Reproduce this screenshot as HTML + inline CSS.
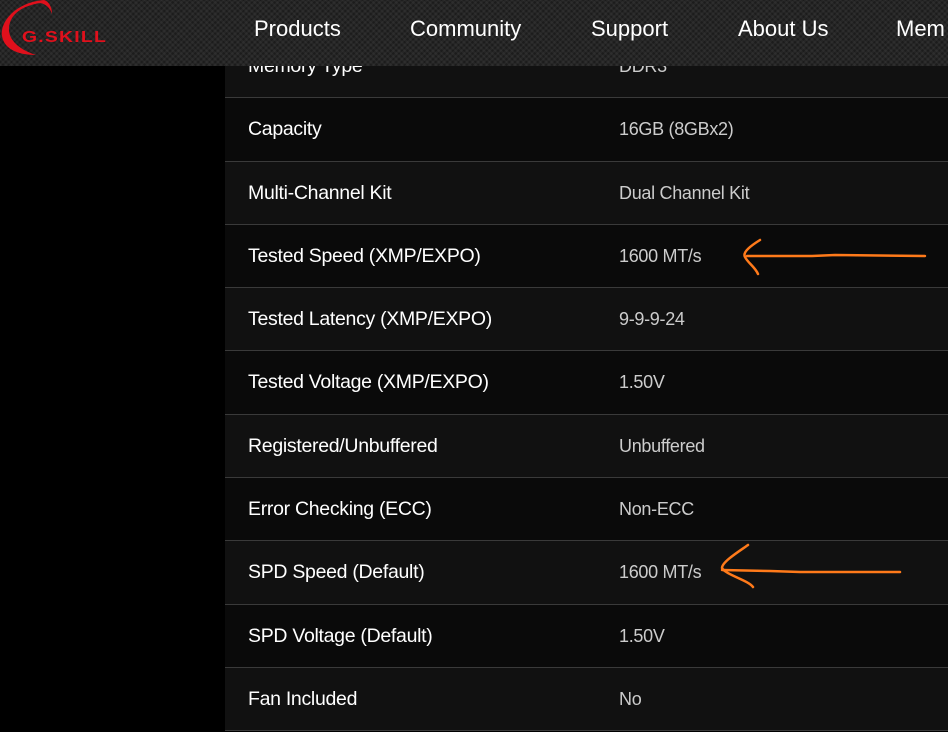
<!DOCTYPE html>
<html><head><meta charset="utf-8"><style>
html,body{margin:0;padding:0;background:#000;width:948px;height:732px;overflow:hidden;font-family:"Liberation Sans",sans-serif;}
.hdr{position:absolute;left:0;top:0;width:948px;height:66px;background:#262626;
background-image:repeating-linear-gradient(45deg,rgba(255,255,255,0.04) 0 2px,transparent 2px 4px),repeating-linear-gradient(-45deg,rgba(0,0,0,0.25) 0 2px,transparent 2px 4px);z-index:2}
.nav{position:absolute;top:16px;color:#fff;font-size:22px;}
.tbl{position:absolute;left:225px;top:35px;width:723px;}
.row{position:relative;height:62.3px;border-bottom:1px solid #3a3a3a;}
.row:nth-child(odd){background:#111}
.row:nth-child(even){background:#0a0a0a}
.l{position:absolute;left:23px;top:20px;color:#fff;font-size:19.5px;letter-spacing:-0.3px}
.v{position:absolute;left:394px;top:21px;color:#ccc;font-size:18px;letter-spacing:-0.3px}
</style></head><body>
<div class="hdr">
<svg width="120" height="60" style="position:absolute;left:0;top:0">
<path d="M44 0 C18 2 0 20 2 36 C4 48 16 55 36 55 C20 50 8 40 9 28 C10 14 22 6 40 3 C46 4 50 8 52 14 C52 6 48 1 44 0 Z" fill="#e0101c"/>
<text x="22" y="42" fill="#e0101c" font-size="16" font-weight="bold" font-family="Liberation Sans" letter-spacing="1" textLength="85" lengthAdjust="spacingAndGlyphs">G.SKILL</text>
</svg>
<div class="nav" style="left:254px">Products</div>
<div class="nav" style="left:410px">Community</div>
<div class="nav" style="left:591px">Support</div>
<div class="nav" style="left:738px">About Us</div>
<div class="nav" style="left:896px">Mem</div>
</div>
<div class="tbl">
<div class="row"><span class="l">Memory Type</span><span class="v">DDR3</span></div>
<div class="row"><span class="l">Capacity</span><span class="v">16GB (8GBx2)</span></div>
<div class="row"><span class="l">Multi-Channel Kit</span><span class="v">Dual Channel Kit</span></div>
<div class="row"><span class="l">Tested Speed (XMP/EXPO)</span><span class="v">1600 MT/s</span></div>
<div class="row"><span class="l">Tested Latency (XMP/EXPO)</span><span class="v">9-9-9-24</span></div>
<div class="row"><span class="l">Tested Voltage (XMP/EXPO)</span><span class="v">1.50V</span></div>
<div class="row"><span class="l">Registered/Unbuffered</span><span class="v">Unbuffered</span></div>
<div class="row"><span class="l">Error Checking (ECC)</span><span class="v">Non-ECC</span></div>
<div class="row"><span class="l">SPD Speed (Default)</span><span class="v">1600 MT/s</span></div>
<div class="row"><span class="l">SPD Voltage (Default)</span><span class="v">1.50V</span></div>
<div class="row"><span class="l">Fan Included</span><span class="v">No</span></div>
</div>
<svg width="948" height="732" style="position:absolute;left:0;top:0;z-index:3" fill="none" stroke="#ff7a1a" stroke-width="2.5" stroke-linecap="round">
<path d="M747 256 L812 256 L835 255 L925 256"/>
<path d="M760 240 C752 245 742 252 745 257 C748 263 755 267 758 274"/>
<path d="M722 570 L770 571 L800 572 L900 572"/>
<path d="M748 545 C738 552 722 562 722 568 C726 575 748 580 753 587"/>
</svg>
</body></html>
